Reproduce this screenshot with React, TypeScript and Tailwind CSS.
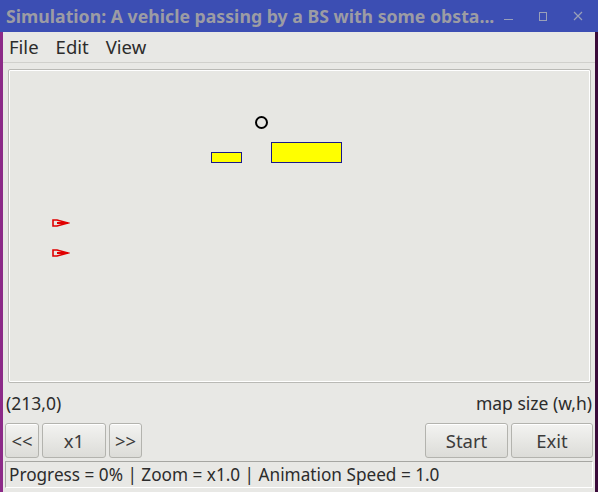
import React from 'react';

const FONT = { fontFamily: '"Noto Sans", "Open Sans", sans-serif' };

function Btn({ label, className }: { label: string; className: string }) {
  return (
    <button
      className={`h-[35px] rounded-[3px] border border-[#b3b3ae] bg-gradient-to-b from-[#f3f3f1] to-[#dcdcd8] text-[18.5px] text-[#3c3c3c] shadow-[inset_0_1px_0_#fff] ${className}`}
    >
      {label}
    </button>
  );
}

export default function App() {
  return (
    <div className="w-[598px] h-[492px] flex flex-col bg-[#7a1f78] overflow-hidden" style={FONT}>
      {/* title bar */}
      <div className="h-[32px] bg-[#3c4eb3] flex items-center pl-[6px] pr-[15px] shrink-0">
        <span className="text-[17.7px] font-bold text-[#9c9ca4] whitespace-nowrap">
          Simulation: A vehicle passing by a BS with some obsta...
        </span>
        <div className="ml-auto flex items-center gap-[26px] text-[#9aa0b8]">
          <span className="block w-[9px] h-[1px] bg-[#9aa0b8] mt-[6px]" />
          <span className="block w-[8px] h-[9px] border border-[#9aa0b8]" />
          <svg width="10" height="10" viewBox="0 0 10 10">
            <path d="M1 1L9 9M9 1L1 9" stroke="#9aa0b8" strokeWidth="1.2" />
          </svg>
        </div>
      </div>

      <div className="flex flex-1 min-h-0">
        <div className="w-[3px] bg-[#8c2a88]" />
        <div className="flex-1 flex flex-col bg-[#e8e8e5] pb-[4px]">
          {/* menu */}
          <div className="h-[31px] flex items-center gap-[17px] pl-[6px] text-[18.5px] text-[#2c2c2c] border-b border-[#d0d0cc] shrink-0">
            <span>File</span>
            <span>Edit</span>
            <span>View</span>
          </div>

          {/* canvas */}
          <div className="mt-[6px] ml-[5px] mr-[4px] h-[314px] border border-[#b9b9b5] rounded-[2px] p-[1px] bg-white">
            <div className="relative w-full h-full bg-[#e7e7e3]">
              <div className="absolute left-[245px] top-[45px] w-[13px] h-[13px] rounded-full border-[2px] border-black" />
              <div className="absolute left-[201px] top-[81px] w-[31px] h-[11px] bg-[#ffff00] border border-[#1a1a8a]" />
              <div className="absolute left-[261px] top-[71px] w-[71px] h-[21px] bg-[#ffff00] border border-[#1a1a8a]" />
              {[148, 178].map((t) => (
                <svg key={t} className="absolute left-[42px]" style={{ top: t }} width="18" height="8" viewBox="0 0 18 8">
                  <path d="M1 1 L1 7 L5 7 L16 4 L5 1 Z" fill="none" stroke="#e00000" strokeWidth="1.6" />
                  <path d="M5 4 L16 4" stroke="#e00000" strokeWidth="2" />
                </svg>
              ))}
            </div>
          </div>

          {/* coords row */}
          <div className="h-[40px] flex items-center justify-between pl-[3px] pr-[3px] text-[17.5px] text-[#2c2c2c] shrink-0">
            <span>(213,0)</span>
            <span>map size (w,h)</span>
          </div>

          {/* buttons */}
          <div className="flex items-center pl-[2px] pr-[2px] shrink-0">
            <Btn label="<<" className="w-[34px]" />
            <Btn label="x1" className="w-[64px] ml-[3px]" />
            <Btn label=">>" className="w-[33px] ml-[3px]" />
            <Btn label="Start" className="w-[83px] ml-auto" />
            <Btn label="Exit" className="w-[82px] ml-[3px]" />
          </div>

          {/* status */}
          <div className="mt-[3px] ml-[2px] mr-[2px] h-[27px] border border-[#a6a6a2] border-r-white border-b-white flex items-center pl-[3px] text-[17.2px] text-[#2c2c2c] whitespace-nowrap">
            Progress = 0% | Zoom = x1.0 | Animation Speed = 1.0
          </div>
        </div>
        <div className="w-[3px] bg-[#3a0b3a]" />
      </div>
    </div>
  );
}
